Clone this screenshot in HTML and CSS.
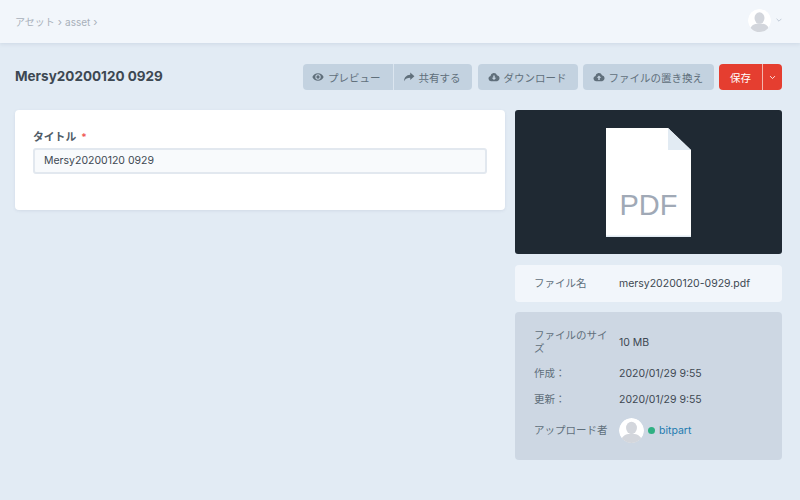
FILE: index.html
```html
<!DOCTYPE html>
<html lang="ja">
<head>
<meta charset="utf-8">
<title>asset</title>
<link rel="stylesheet" href="styles.css">
</head>
<body>
<header class="topbar">
  <nav class="crumbs">
    <span>アセット</span><span class="sep">›</span><span>asset</span><span class="sep">›</span>
  </nav>
  <div class="user">
    <span class="avatar avatar-top">
      <svg viewBox="0 0 24 24"><circle cx="12" cy="12" r="12" fill="#fff"/><ellipse cx="12" cy="9.500" rx="5.200" ry="6" fill="#d3d6dc"/><path d="M2.500 20c1.500-4 5.500-5 9.500-5s8 1 9.500 5a12 12 0 0 1-19 0z" fill="#d3d6dc"/></svg>
    </span>
    <svg class="chev" viewBox="0 0 10 6"><path d="M1 1l4 4 4-4" fill="none" stroke="#a0aec0" stroke-width="1"/></svg>
  </div>
</header>
<main class="content">
  <div class="head">
    <h1>Mersy20200120 0929</h1>
    <div class="actions">
      <div class="group">
        <button class="btn btn-first"><svg class="ico" viewBox="0 0 16 12"><path d="M8 1C4.500 1 1.700 3.300.5 6c1.200 2.700 4 5 7.500 5s6.300-2.300 7.500-5C14.300 3.300 11.500 1 8 1z" fill="#606f7b"/><circle cx="8" cy="6" r="3.600" fill="#c3d2e0"/><circle cx="8" cy="6" r="2.200" fill="#606f7b"/></svg>プレビュー</button>
        <button class="btn btn-joined"><svg class="ico" viewBox="0 0 14 12"><path d="M8.500.5L13.500 5l-5 4.500V7C5 7 2.800 8 1 11c.2-4.500 2.800-7.500 7.500-7.800z" fill="#606f7b"/></svg>共有する</button>
      </div>
      <button class="btn btn-solo"><svg class="ico" viewBox="0 0 16 12"><path d="M4 11.500a3.500 3.500 0 0 1-.7-6.900A4.500 4.500 0 0 1 12 3.600a4 4 0 0 1 .2 7.900z" fill="#606f7b"/><path d="M7 4h2v3h2L8 10 5 7h2z" fill="#c3d2e0"/></svg>ダウンロード</button>
      <button class="btn btn-solo"><svg class="ico" viewBox="0 0 16 12"><path d="M4 11.500a3.500 3.500 0 0 1-.7-6.900A4.500 4.500 0 0 1 12 3.600a4 4 0 0 1 .2 7.900z" fill="#606f7b"/><path d="M7 10h2V7h2L8 4 5 7h2z" fill="#c3d2e0"/></svg>ファイルの置き換え</button>
      <div class="group">
        <button class="btn-red">保存</button>
        <button class="btn-red btn-caret"><svg viewBox="0 0 10 6"><path d="M1.500 1L5 4.500 8.500 1" fill="none" stroke="#fff" stroke-width="1.200"/></svg></button>
      </div>
    </div>
  </div>
  <div class="columns">
    <section class="card">
      <label class="label">タイトル<span class="req">*</span></label>
      <div class="input">Mersy20200120 0929</div>
    </section>
    <aside class="side">
      <div class="preview">
        <svg class="doc" viewBox="0 0 85 109">
          <path d="M0 0H62L85 22V109H0z" fill="#fff"/>
          <path d="M0 107.500H85V109H0z" fill="#e2ebf3"/>
          <path d="M62 0L85 22H62z" fill="#e2ebf3"/>
          <text x="42.500" y="87" text-anchor="middle" class="pdf">PDF</text>
        </svg>
      </div>
      <div class="filename">
        <span class="key">ファイル名</span><span class="val">mersy20200120-0929.pdf</span>
      </div>
      <dl class="meta">
        <div class="row"><dt class="key">ファイルのサイズ</dt><dd class="val">10 MB</dd></div>
        <div class="row"><dt class="key">作成：</dt><dd class="val">2020/01/29 9:55</dd></div>
        <div class="row"><dt class="key">更新：</dt><dd class="val">2020/01/29 9:55</dd></div>
        <div class="row"><dt class="key">アップロード者</dt><dd class="val uploader">
          <span class="avatar avatar-up">
            <svg viewBox="0 0 24 24"><circle cx="12" cy="12" r="12" fill="#fff"/><ellipse cx="12" cy="9.500" rx="5.200" ry="6" fill="#d3d6dc"/><path d="M2.500 20c1.500-4 5.500-5 9.500-5s8 1 9.500 5a12 12 0 0 1-19 0z" fill="#d3d6dc"/></svg>
          </span>
          <span class="dot"></span><a class="link">bitpart</a>
        </dd></div>
      </dl>
    </aside>
  </div>
</main>
</body>
</html>
```
FILE: styles.css
```css
* { box-sizing: border-box; }
html, body { height: 100%; }
body {
  margin: 0;
  background: #e2ebf4;
  color: #3d4852;
  font-family: Inter, "Noto Sans CJK JP", sans-serif;
  font-size: 10.5px;
  overflow: hidden;
}
.topbar {
  height: 43px;
  background: #f2f6fb;
  box-shadow: 0 1px 4px rgba(90, 110, 140, .15);
  display: flex;
  align-items: center;
  justify-content: space-between;
  padding: 0 18px 0 15px;
}
.crumbs { display: flex; align-items: center; gap: 3px; color: #a8b0ba; font-size: 10px; }
.sep { font-size: 11px; }
.user { display: flex; align-items: center; gap: 5px; margin-bottom: 3px; }
.avatar { display: block; border-radius: 50%; overflow: hidden; }
.avatar svg { display: block; width: 100%; height: 100%; }
.avatar-top { width: 23px; height: 23px; }
.chev { width: 6px; height: 4px; }
.content { padding: 21px 18px 0 15px; }
.head { display: flex; justify-content: space-between; align-items: center; height: 26px; }
h1 { margin: 0 0 2px; font-size: 13.500px; font-weight: 700; color: #3d4852; }
.actions { display: flex; gap: 5px; }
.group { display: flex; }
.actions > .group:first-child { margin-right: 1px; }
.btn, .btn-red {
  border: 0;
  height: 26px;
  font-family: inherit;
  font-size: 10.500px;
  display: flex;
  align-items: center;
  justify-content: center;
  white-space: nowrap;
}
.btn {
  background: #c3d2e0;
  color: #606f7b;
  padding: 0 11px 0 9px;
  border-radius: 4px 0 0 4px;
  gap: 4px;
}
.btn-first { padding-right: 12px; }
.btn-joined { border-left: 1px solid #dbe5ef; border-radius: 0 4px 4px 0; padding: 0 11px 0 9px; }
.btn-solo { border-radius: 4px; padding: 0 11px 0 10px; }
.ico { width: 12px; height: 10px; flex: none; }
.btn-red {
  background: #e53e30;
  color: #fff;
  padding: 0;
  border-radius: 4px 0 0 4px;
  width: 43px;
}
.btn-caret {
  width: 20px;
  border-left: 1px solid #f3b6ae;
  border-radius: 0 4px 4px 0;
}
.btn-caret svg { width: 7px; height: 5px; }
.columns { display: flex; align-items: flex-start; gap: 10px; margin-top: 20px; }
.card {
  width: 490px;
  height: 100px;
  background: #fff;
  border-radius: 4px;
  box-shadow: 0 1px 3px rgba(90, 110, 140, .12);
  padding: 20px 18px 0;
}
.label { display: block; font-weight: 600; font-size: 10.800px; color: #4f5b66; line-height: 14px; }
.req { color: #ef5753; margin-left: 5px; font-size: 10px; }
.input {
  margin-top: 3px;
  height: 26px;
  border: 2px solid #e2e8ef;
  border-radius: 3px;
  background: #f8fafc;
  padding: 0 9px;
  line-height: 22px;
  color: #3d4852;
}
.side { width: 267px; display: flex; flex-direction: column; }
.preview {
  height: 144px;
  background: #1f2933;
  border-radius: 3px;
  display: flex;
  justify-content: center;
  padding-top: 18px;
}
.doc { width: 85px; height: 109px; display: block; }
.pdf { font-family: "Liberation Sans", sans-serif; font-size: 29px; fill: #a0a9b6; }
.filename {
  margin-top: 11px;
  height: 37px;
  background: #f2f6fb;
  border-radius: 4px;
  display: flex;
  align-items: center;
  padding-left: 19px;
}
.key { color: #606f7b; width: 85px; padding-right: 10px; flex: none; line-height: 13px; }
.val { color: #3d4852; }
.meta {
  margin: 10px 0 0;
  background: #cdd7e3;
  border-radius: 4px;
  height: 148px;
  padding: 17px 19px 0;
  display: flex;
  flex-direction: column;
}
.row { display: flex; align-items: center; margin-bottom: 11px; min-height: 15px; }
.row dd { margin: 0; }
.uploader { display: flex; align-items: center; }
.avatar-up { width: 25px; height: 25px; }
.dot { width: 7px; height: 7px; border-radius: 50%; background: #2fb083; margin: 0 4px; }
.link { color: #1f7cb0; }
```
